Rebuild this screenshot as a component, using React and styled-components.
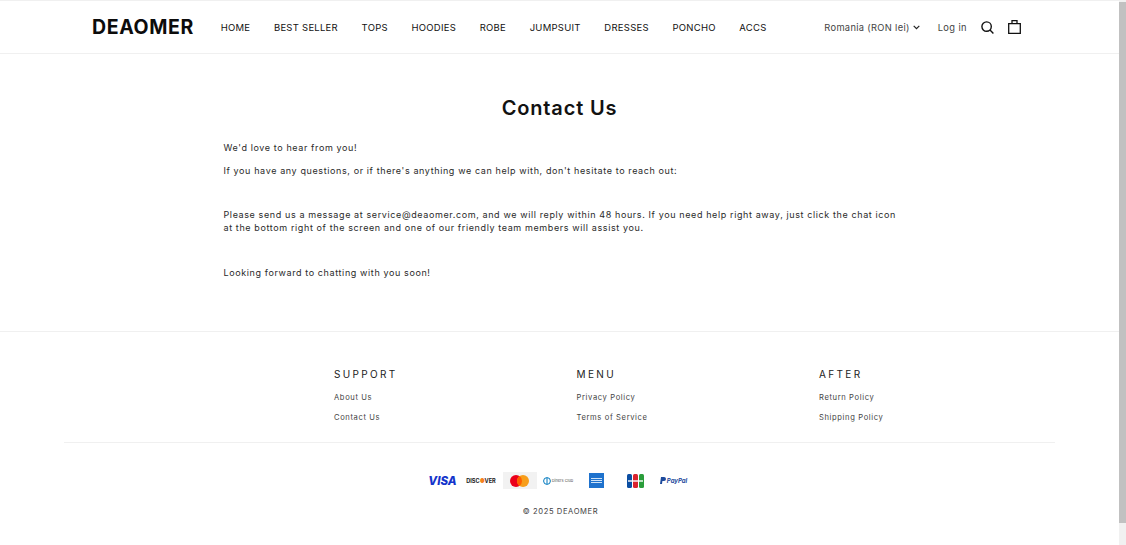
import React from "react";
import styled, { createGlobalStyle } from "styled-components";

const GlobalStyle = createGlobalStyle`
  body {
    margin: 0 7px 0 0;
    background: #fff;
    color: #121212;
    font-family: Inter, "Liberation Sans", sans-serif;
  }

  a {
    color: inherit;
    text-decoration: none;
  }
`;

const ScrollTrack = styled.div`
  position: fixed;
  top: 0;
  right: 0;
  bottom: 0;
  width: 7px;
  background: #f1f1f1;
`;

const ScrollThumb = styled.div`
  height: 521px;
  margin-top: 2px;
  background: #c1c1c1;
`;

const Header = styled.header`
  height: 54px;
  box-sizing: border-box;
  border-top: 1px solid #f0f0f0;
  border-bottom: 1px solid #f0f0f0;
  padding: 0 98px 0 92px;
  display: flex;
  align-items: center;
  white-space: nowrap;
`;

const Logo = styled.a`
  font-size: 19.5px;
  font-weight: 700;
  letter-spacing: 0.65px;
  color: #0c0c0c;
  margin-right: 26.6px;
`;

const Nav = styled.nav`
  display: flex;
  gap: 23.6px;
  flex: 1;
`;

const NavLink = styled.a`
  font-size: 9.5px;
  letter-spacing: 0.26px;
  color: #111;
`;

const Tools = styled.div`
  display: flex;
  align-items: center;
`;

const Currency = styled.a`
  display: flex;
  align-items: center;
  gap: 3px;
  font-size: 9.3px;
  letter-spacing: 0.33px;
  color: #444;
  margin-right: 18px;
`;

const Login = styled.a`
  font-size: 9.3px;
  letter-spacing: 0.4px;
  color: #444;
  margin-right: 14px;
`;

const IconButton = styled.span`
  display: flex;
  margin-left: ${(p) => p.$gap || 0}px;
`;

const Main = styled.main`
  width: 672px;
  margin: 0 auto;
  height: 277px;
  padding-top: 41px;
  box-sizing: border-box;
`;

const Title = styled.h1`
  margin: 0 0 20px;
  font-size: 20px;
  font-weight: 600;
  line-height: 26px;
  letter-spacing: 0.85px;
  text-align: center;
`;

const Para = styled.p`
  margin: 0 -4px ${(p) => p.$after || 10}px 0;
  font-size: 9px;
  line-height: 13px;
  letter-spacing: 0.61px;
  color: #2a2a2a;
`;

const Footer = styled.footer`
  border-top: 1px solid #f0f0f0;
`;

const Columns = styled.div`
  margin: 0 64px;
  padding: 36px 0 9px 270px;
  display: grid;
  grid-template-columns: 242.5px 242.5px auto;
  border-bottom: 1px solid #f0f0f0;
`;

const ColumnTitle = styled.h4`
  margin: 0 0 12px;
  font-size: 10px;
  line-height: 13px;
  font-weight: 400;
  letter-spacing: 2.35px;
  color: #222;
`;

const ColumnLink = styled.a`
  display: block;
  font-size: 7.6px;
  line-height: 10px;
  letter-spacing: 0.62px;
  color: #444;
  margin-bottom: 10px;
`;

const Payments = styled.div`
  display: flex;
  justify-content: center;
  align-items: center;
  gap: 4.5px;
  padding: 29px 3px 0 0;
`;

const PayCell = styled.span`
  width: 34px;
  height: 17px;
  display: flex;
  align-items: center;
  justify-content: center;
  background: ${(p) => p.$bg || "transparent"};
`;

const VisaMark = styled.span`
  font-size: 11.5px;
  font-weight: 800;
  font-style: italic;
  color: #1434cb;
`;

const DiscoverMark = styled.span`
  font-size: 5.6px;
  font-weight: 700;
  color: #222;
`;

const DiscoverDot = styled.span`
  color: #f58220;
`;

const DinersMark = styled.span`
  font-size: 3.9px;
  color: #555;
  margin-left: 1px;
  line-height: 1;
  white-space: nowrap;
`;

const PayPalMark = styled.span`
  font-size: 6px;
  font-weight: 700;
  font-style: italic;
  color: #1d4a9c;
  margin-left: 1px;
`;

const Copyright = styled.p`
  margin: 18px 0 0;
  padding-left: 2px;
  font-size: 7.6px;
  line-height: 10px;
  letter-spacing: 0.6px;
  text-align: center;
  color: #444;
`;

const navItems = [
  "HOME",
  "BEST SELLER",
  "TOPS",
  "HOODIES",
  "ROBE",
  "JUMPSUIT",
  "DRESSES",
  "PONCHO",
  "ACCS",
];

const footerColumns = [
  { title: "SUPPORT", links: ["About Us", "Contact Us"] },
  { title: "MENU", links: ["Privacy Policy", "Terms of Service"] },
  { title: "AFTER", links: ["Return Policy", "Shipping Policy"] },
];

const App = () => {
  return (
    <>
      <GlobalStyle />
      <ScrollTrack>
        <ScrollThumb />
      </ScrollTrack>
      <Header>
        <Logo href="#">DEAOMER</Logo>
        <Nav>
          {navItems.map((item) => (
            <NavLink href="#" key={item}>
              {item}
            </NavLink>
          ))}
        </Nav>
        <Tools>
          <Currency href="#">
            Romania (RON lei)
            <svg width="7" height="5" viewBox="0 0 7 5" fill="none" stroke="#222" strokeWidth="1.2">
              <path d="M.7.8l2.8 2.8L6.3.8" />
            </svg>
          </Currency>
          <Login href="#">Log in</Login>
          <IconButton>
            <svg width="13" height="13" viewBox="0 0 13 13" fill="none" stroke="#111" strokeWidth="1.4">
              <circle cx="5.6" cy="5.6" r="4.7" />
              <path d="M9 9l3.4 3.4" />
            </svg>
          </IconButton>
          <IconButton $gap={14}>
            <svg width="13" height="14" viewBox="0 0 13 14" fill="none" stroke="#111" strokeWidth="1.3">
              <path d="M.7 3.7h11.6v9.6H.7z" />
              <path d="M4 3.7V.7h5v3" />
            </svg>
          </IconButton>
        </Tools>
      </Header>
      <Main>
        <Title>Contact Us</Title>
        <Para>We'd love to hear from you!</Para>
        <Para $after={31}>
          If you have any questions, or if there's anything we can help with, don't hesitate to reach out:
        </Para>
        <Para $after={32}>
          Please send us a message at service@deaomer.com, and we will reply within 48 hours. If you need help right away, just click the chat icon at the bottom right of the screen and one of our friendly team members will assist you.
        </Para>
        <Para>Looking forward to chatting with you soon!</Para>
      </Main>
      <Footer>
        <Columns>
          {footerColumns.map((col) => (
            <div key={col.title}>
              <ColumnTitle>{col.title}</ColumnTitle>
              {col.links.map((link) => (
                <ColumnLink href="#" key={link}>
                  {link}
                </ColumnLink>
              ))}
            </div>
          ))}
        </Columns>
        <Payments>
          <PayCell><VisaMark>VISA</VisaMark></PayCell>
          <PayCell>
            <DiscoverMark>DISC<DiscoverDot>●</DiscoverDot>VER</DiscoverMark>
          </PayCell>
          <PayCell $bg="#f2f2f2">
            <svg width="19" height="12" viewBox="0 0 19 12">
              <circle cx="6" cy="6" r="6" fill="#eb001b" />
              <circle cx="13" cy="6" r="6" fill="#f79e1b" />
              <path d="M9.5 1.1a6 6 0 010 9.8 6 6 0 010-9.8z" fill="#ff5f00" />
            </svg>
          </PayCell>
          <PayCell>
            <svg width="8" height="8" viewBox="0 0 8 8" fill="none" stroke="#0079be">
              <circle cx="4" cy="4" r="3.4" />
              <path d="M4 1v6" />
            </svg>
            <DinersMark>Diners Club</DinersMark>
          </PayCell>
          <PayCell>
            <svg width="15" height="15" viewBox="0 0 15 15">
              <rect width="15" height="15" fill="#1f72cd" />
              <path d="M2 5.5h11M2 7.5h11M2 9.5h11" stroke="#cfe3f7" strokeWidth="1" />
            </svg>
          </PayCell>
          <PayCell>
            <svg width="17" height="14" viewBox="0 0 17 14">
              <rect width="5" height="14" rx="1.5" fill="#0b4ea2" />
              <rect x="6" width="5" height="14" rx="1.5" fill="#d9232e" />
              <rect x="12" width="5" height="14" rx="1.5" fill="#2a9d3b" />
              <path d="M1 7h15" stroke="#fff" strokeWidth="1.4" />
            </svg>
          </PayCell>
          <PayCell>
            <svg width="6" height="7" viewBox="0 0 6 7">
              <path d="M1 0h3a1.7 1.7 0 010 4H2.4L2 7H0z" fill="#1d4a9c" />
            </svg>
            <PayPalMark>PayPal</PayPalMark>
          </PayCell>
        </Payments>
        <Copyright>© 2025 DEAOMER</Copyright>
      </Footer>
    </>
  );
};

export default App;
